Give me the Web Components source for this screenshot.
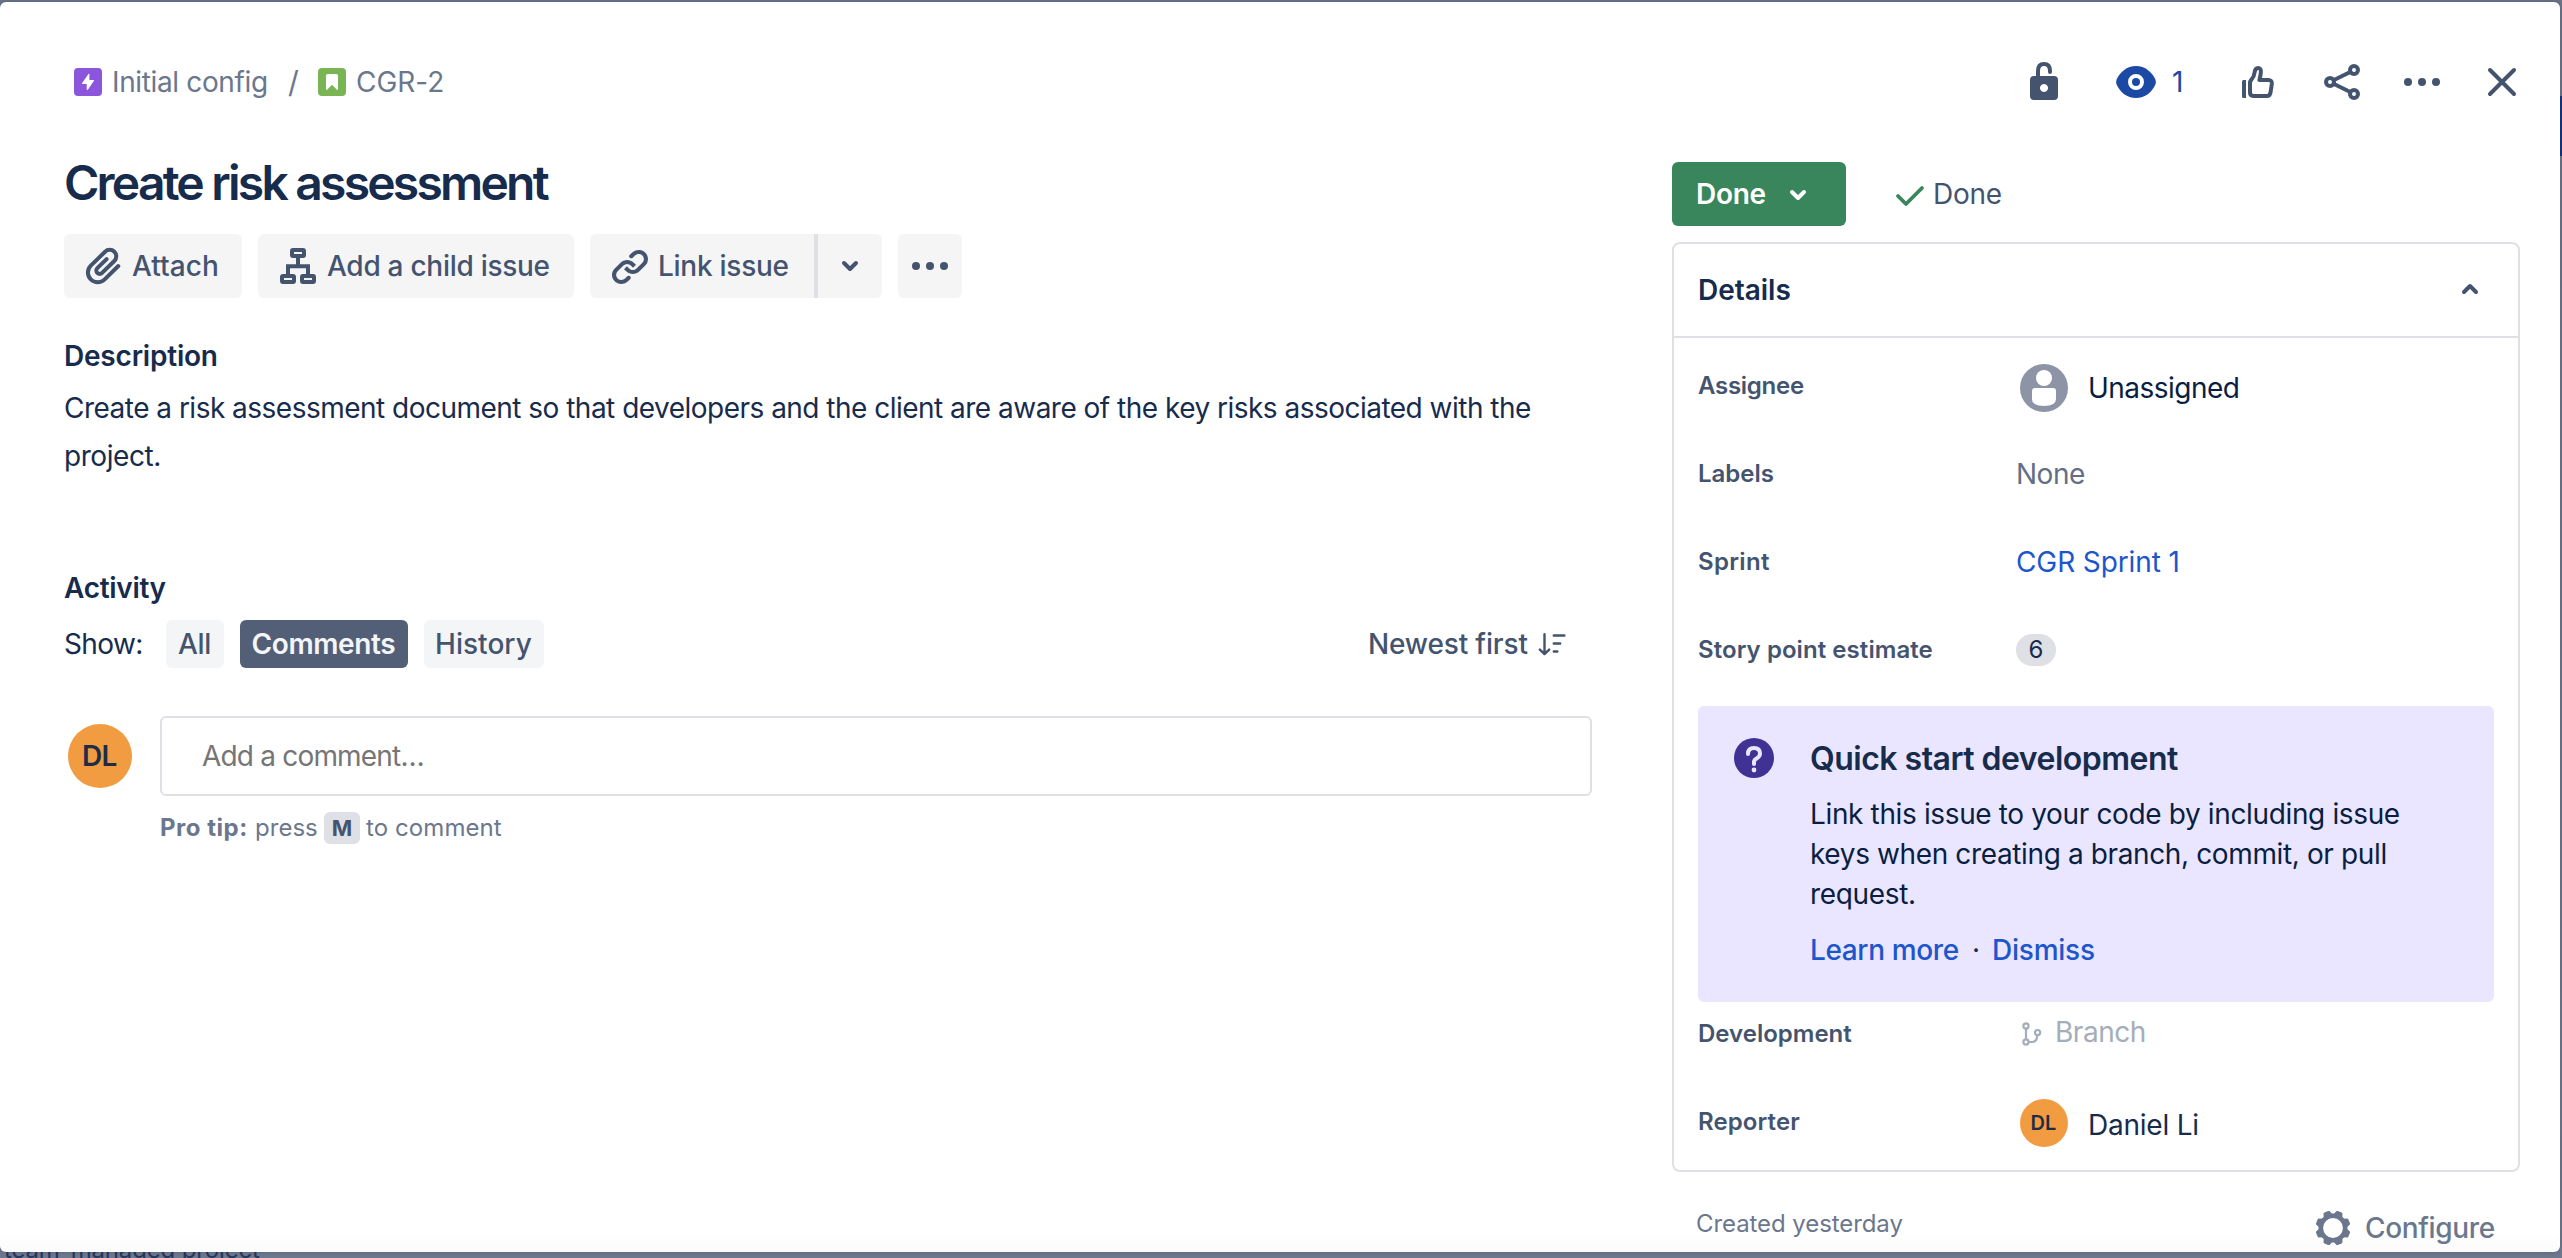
<!DOCTYPE html>
<html lang="en">
<head>
<meta charset="utf-8">
<title>Create risk assessment</title>
<style>
html,body{margin:0;height:100%;overflow:hidden}
body{background:#6c768b;font-family:Inter,"Liberation Sans",sans-serif}
</style>
</head>
<body>
<issue-dialog></issue-dialog>
<script>
const define = (name, html, setup) => {
  const tpl = document.createElement('template');
  tpl.innerHTML = html;
  customElements.define(name, class extends HTMLElement {
    connectedCallback() {
      if (this.shadowRoot) return;
      this.attachShadow({mode: 'open'}).append(tpl.content.cloneNode(true));
      if (setup) setup.call(this, this.shadowRoot);
    }
  });
};

/* One line of text, tracked so that it fills the width given in "w". */
define('ui-text', `<style>
:host{display:block;flex:none;white-space:nowrap;font-size:28px;line-height:40px}
</style><slot></slot>`, function () {
  const w = +this.getAttribute('w');
  if (!w) return;
  const range = document.createRange();
  range.selectNodeContents(this);
  const natural = range.getBoundingClientRect().width;
  this.style.letterSpacing = (w - 1.2 - natural) / this.textContent.length + 'px';
  this.style.width = w + 'px';
});

const S = (w, extra = '') => `fill="none" stroke="currentColor" stroke-width="${w}" stroke-linecap="round" stroke-linejoin="round" ${extra}`;
const ICONS = {
  epic: [28, 28, '<rect width="28" height="28" rx="4" fill="#8b55dc"/><path d="M14.6 5.8 L8 15.2 Q7.7 16 8.5 16 H12.7 V21.4 Q13.2 22.6 14 21.6 L20 12.8 Q20.4 12 19.5 12 H15.4 V6.3 Q15.2 5.3 14.6 5.8Z" fill="#fff"/>'],
  story: [28, 28, '<rect width="28" height="28" rx="4" fill="#79b554"/><path d="M8 7.6 Q8 6 9.6 6 H18.4 Q20 6 20 7.6 V21.4 Q19.6 22.4 18.7 21.6 L14 16.8 L9.3 21.6 Q8.4 22.4 8 21.4Z" fill="#fff"/>'],
  unlock: [28, 38, `<path d="M8 15 V9 Q8 2 14 2 T20 9 V10" ${S(4)}/><path fill-rule="evenodd" fill="currentColor" d="M4 14 H24 Q28 14 28 18 V34 Q28 38 24 38 H4 Q0 38 0 34 V18 Q0 14 4 14Z M14 22 a4 4 0 1 0 .01 0Z"/>`],
  watch: [40, 32, '<path fill="currentColor" d="M20 0 C29 0 36 6 39.4 13.6 Q40.4 16 39.4 18.4 C36 26 29 32 20 32 C11 32 4 26 .6 18.4 Q-.4 16 .6 13.6 C4 6 11 0 20 0Z"/><circle cx="20" cy="16" r="6" fill="currentColor" stroke="#fff" stroke-width="4"/>'],
  like: [32, 32, `<path d="M0 15.5 Q0 14 1.5 14 H4 V32 H1.5 Q0 32 0 30.5Z" fill="currentColor"/><path d="M8 17 Q8 15.2 9.4 13.6 Q12.2 10.6 12.6 6.4 Q13.1 2 16.1 2 Q19 2 18.9 5.6 Q18.8 8.6 17.4 14 H26.3 Q30.3 14 29.8 18 L28.5 26.7 Q27.9 30 25 30 H11.4 Q8 30 8 26.6Z" ${S(4)}/>`],
  share: [36, 36, `<g ${S(4)}><circle cx="6" cy="18" r="4"/><circle cx="30" cy="6" r="4"/><circle cx="30" cy="30" r="4"/><path d="M10 16 L26.3 8 M10 20 L26.3 28"/></g>`],
  more: [36, 36, '<g fill="currentColor"><circle cx="4" cy="18" r="4"/><circle cx="18" cy="18" r="4"/><circle cx="32" cy="18" r="4"/></g>'],
  close: [28, 28, `<path d="M2 2 L26 26 M26 2 L2 26" ${S(4)}/>`],
  attach: [48, 48, '<path transform="scale(2)" fill="currentColor" d="M11.643 17.965c-1.53 1.495-4.016 1.496-5.542.004a3.773 3.773 0 01.002-5.412l7.147-6.985a2.316 2.316 0 013.22.004 2.224 2.224 0 01-.004 3.185l-6.12 5.98c-.27.264-.716.264-.983.003a.671.671 0 01.003-.956l4.635-4.53a1 1 0 00-1.397-1.431l-4.635 4.53a2.671 2.671 0 00-.004 3.816c1.045 1.022 2.732 1.022 3.779-.001l6.12-5.98a4.222 4.222 0 00.004-6.047 4.316 4.316 0 00-6.016-.004l-7.147 6.984a5.773 5.773 0 00-.002 8.273c2.304 2.252 6.034 2.25 8.337-.003l6.817-6.66a1 1 0 00-1.398-1.431l-6.816 6.66z"/>'],
  child: [36, 36, `<g ${S(4)}><rect x="12" y="2" width="12" height="6" rx="1"/><rect x="2" y="28" width="12" height="6" rx="1"/><rect x="22" y="28" width="12" height="6" rx="1"/><path d="M18 9 V18 M8 27 V18.2 H28 V27" stroke-linejoin="miter" stroke-linecap="butt"/></g>`],
  link: [48, 48, '<g transform="scale(2)" fill="currentColor"><path d="M12.856 5.457l-.937.92a1.002 1.002 0 000 1.437 1.047 1.047 0 001.463 0l.984-.966c.967-.95 2.542-1.135 3.602-.288a2.54 2.54 0 01.203 3.81l-2.903 2.852a2.646 2.646 0 01-3.696 0l-1.11-1.09L9 13.57l1.108 1.089c1.822 1.788 4.802 1.788 6.622 0l2.905-2.852a4.558 4.558 0 00-.357-6.82c-1.893-1.517-4.695-1.226-6.422.47"/><path d="M11.144 19.543l.937-.92a1.002 1.002 0 000-1.437 1.047 1.047 0 00-1.462 0l-.985.966c-.967.95-2.542 1.135-3.602.288a2.54 2.54 0 01-.203-3.81l2.903-2.852a2.646 2.646 0 013.696 0l1.11 1.09L15 11.43l-1.108-1.089c-1.822-1.788-4.802-1.788-6.622 0l-2.905 2.852a4.558 4.558 0 00.357 6.82c1.893 1.517 4.695 1.226 6.422-.47"/></g>'],
  down: [16, 10, `<path d="M2 2 L8 8 L14 2" ${S(4)}/>`],
  up: [16, 10, `<path d="M2 8 L8 2 L14 8" ${S(4)}/>`],
  check: [28, 20, `<path d="M2 10 L10 18 L26 2" ${S(3.8)}/>`],
  sort: [28, 24, `<g ${S(2.4)}><path d="M6.5 2.2 V21 M1.8 17.6 L6.5 22 L11.2 17.6"/><path d="M15.8 3.5 H26.4 M15.8 11.5 H22.2 M15.8 19.5 H19.4"/></g>`],
  person: [48, 48, '<circle cx="24" cy="24" r="24" fill="#8c94a5"/><circle cx="24" cy="14" r="8" fill="#fff"/><path fill="#fff" d="M15 24 H33 Q36 24 36 27 V35 Q36 42 24 42 Q12 42 12 35 V27 Q12 24 15 24Z"/>'],
  help: [40, 40, '<circle cx="20" cy="20" r="20" fill="#403294"/><path d="M14 16 Q14 10 20 10 Q26 10 26 15.6 Q26 18.6 22.6 20.4 Q20 21.8 20 24 V26" fill="none" stroke="#eae6ff" stroke-width="4" stroke-linecap="round"/><circle cx="20" cy="32" r="2.4" fill="#eae6ff"/>'],
  branch: [20, 24, `<g ${S(2.2)}><circle cx="4" cy="4" r="2.6"/><circle cx="4" cy="20" r="2.6"/><circle cx="15.6" cy="10.6" r="2.6"/><path d="M4 6.6 V17.4 M6.6 20 H10.6 Q15 19.6 15.2 13.4"/></g>`],
  gear: [36, 36, `<circle cx="18" cy="18" r="12.2" fill="none" stroke="currentColor" stroke-width="4.6"/><g fill="currentColor">${[0,1,2,3,4,5,6,7].map(i => `<path transform="rotate(${22.5 + i * 45} 18 18)" d="M13 6 L14.6 1.4 Q15 .5 16 .5 H20 Q21 .5 21.4 1.4 L23 6Z"/>`).join('')}</g>`]
};
define('ui-icon', `<style>:host{display:block;flex:none;line-height:0}svg{display:block;overflow:visible}</style><div></div>`, function (root) {
  const [w, h, body] = ICONS[this.getAttribute('name')];
  root.querySelector('div').innerHTML = `<svg width="${w}" height="${h}" viewBox="0 0 ${w} ${h}">${body}</svg>`;
});

define('ui-button', `<style>
:host{display:flex;flex:none;align-items:center;box-sizing:border-box;height:64px;border-radius:6px;background:#f5f5f6;color:#44546f;font-weight:550}
</style><slot></slot>`);

define('ui-pill', `<style>
:host{display:flex;flex:none;align-items:center;justify-content:center;height:48px;border-radius:6px;background:#f4f5f7;color:#44546f;font-weight:550}
:host([selected]){background:#535f77;color:#f4f5f7}
</style><slot></slot>`);

define('ui-avatar', `<style>
:host{display:flex;flex:none;align-items:center;justify-content:center;border-radius:50%;background:#f29c42;color:#1f2c48;font-weight:600;width:64px;height:64px}
:host([small]){width:48px;height:48px}
</style><slot></slot>`);

define('detail-row', `<style>
:host{display:flex;align-items:center;height:88px;padding-left:24px;color:#44546f}
ui-text{font-size:24px;font-weight:600;line-height:32px}
.l{width:318px;flex:none}
.v{display:flex;align-items:center;color:#172b4d}
</style><div class="l"><ui-text></ui-text></div><div class="v"><slot></slot></div>`, function (root) {
  const t = document.createElement('ui-text');
  t.setAttribute('w', this.getAttribute('w'));
  t.textContent = this.getAttribute('label');
  root.querySelector('ui-text').replaceWith(t);
});

define('issue-header', `<style>
:host{display:flex;align-items:center;height:160px;padding:0 44px 0 74px;color:#44546f}
.crumbs{display:flex;align-items:center;color:#6b778c;flex:1}
.watch{display:flex;align-items:center;color:#1c49a3;margin:0 57px 0 58px}
</style>
<div class="crumbs">
<ui-icon name="epic"></ui-icon><ui-text w="157" style="margin-left:10px">Initial config</ui-text>
<ui-text style="margin-left:19px;width:30px;font-size:30px">/</ui-text>
<ui-icon name="story"></ui-icon><ui-text w="89.5" style="margin-left:10px">CGR-2</ui-text></div>
<ui-icon name="unlock" style="margin-bottom:2px"></ui-icon>
<div class="watch"><ui-icon name="watch"></ui-icon><ui-text style="margin-left:16px;width:13px">1</ui-text></div>
<ui-icon name="like"></ui-icon>
<ui-icon name="share" style="margin-left:50px"></ui-icon>
<ui-icon name="more" style="margin-left:44px"></ui-icon>
<ui-icon name="close" style="margin-left:48px"></ui-icon>`);

define('issue-main', `<style>
:host{display:flex;flex-direction:column;width:1528px;flex:none;color:#172b4d}
.row{display:flex;align-items:center}
.title{font-size:48px;line-height:42px;font-weight:600}
.actions{margin-top:30px;height:64px}
.h{font-weight:600}
.body ui-text{line-height:48px}
.show{margin-top:12px;height:48px}
.sort{margin-left:auto;color:#44546f;font-weight:550;padding-right:26px}
.comment{margin-top:48px;padding-left:4px;height:80px}
.box{display:flex;align-items:center;box-sizing:border-box;width:1432px;height:80px;margin-left:28px;border:2px solid #dfe0e6;border-radius:6px;padding-left:40px;color:#757575}
.tip{margin:16px 0 0 96px;height:32px;color:#6b778c}
.tip ui-text{font-size:24px;line-height:32px}
.key{display:flex;align-items:center;justify-content:center;width:36px;height:32px;border-radius:6px;background:#dfe0e5;color:#44546f}
.key ui-text{font-size:22px;font-weight:700}
</style>
<ui-text class="title" w="484">Create risk assessment</ui-text>
<div class="row actions">
<ui-button style="width:178px;padding-left:16px"><ui-icon name="attach"></ui-icon><ui-text w="88" style="margin-left:4px">Attach</ui-text></ui-button>
<ui-button style="width:316px;padding-left:22px;margin-left:16px"><ui-icon name="child"></ui-icon><ui-text w="224" style="margin-left:11px">Add a child issue</ui-text></ui-button>
<ui-button style="width:224px;padding-left:16px;margin-left:16px;border-radius:6px 0 0 6px"><ui-icon name="link"></ui-icon><ui-text w="132" style="margin-left:4px">Link issue</ui-text></ui-button>
<ui-button style="width:68px;border-left:4px solid #dfe0e6;padding-left:24px;border-radius:0 6px 6px 0"><ui-icon name="down"></ui-icon></ui-button>
<ui-button style="width:64px;padding-left:14px;margin-left:16px"><ui-icon name="more"></ui-icon></ui-button>
</div>
<ui-text class="h" w="155" style="margin-top:38px">Description</ui-text>
<div class="body" style="margin-top:8px"><ui-text w="1468">Create a risk assessment document so that developers and the client are aware of the key risks associated with the</ui-text><ui-text w="98">project.</ui-text></div>
<ui-text class="h" w="103" style="margin-top:88px">Activity</ui-text>
<div class="row show"><ui-text w="80">Show:</ui-text>
<ui-pill style="width:58px;margin-left:22px"><ui-text w="34">All</ui-text></ui-pill>
<ui-pill selected style="width:168px;margin-left:16px"><ui-text w="145" style="font-weight:600">Comments</ui-text></ui-pill>
<ui-pill style="width:120px;margin-left:16px"><ui-text w="98">History</ui-text></ui-pill>
<div class="row sort"><ui-text w="161">Newest first</ui-text><ui-icon name="sort" style="margin-left:9px"></ui-icon></div></div>
<div class="row comment"><ui-avatar><ui-text w="36">DL</ui-text></ui-avatar><div class="box"><ui-text w="223">Add a comment…</ui-text></div></div>
<div class="row tip"><ui-text w="89" style="font-weight:700">Pro tip:</ui-text><ui-text w="64" style="margin-left:6px">press</ui-text><div class="key" style="margin-left:5px"><ui-text>M</ui-text></div><ui-text w="137" style="margin-left:6px">to comment</ui-text></div>`);

define('quick-start', `<style>
:host{display:flex;box-sizing:border-box;width:796px;height:296px;margin-left:24px;padding:32px 0 0 36px;border-radius:6px;background:#eae6ff;color:#091e42}
.c{margin-left:36px}
.h{font-size:32px;font-weight:600;line-height:40px;color:#172b4d;margin:1px 0 15px}
.links{display:flex;margin-top:16px;font-weight:550;color:#1c55cc}
</style><ui-icon name="help"></ui-icon><div class="c">
<ui-text class="h" w="369">Quick start development</ui-text>
<ui-text w="591">Link this issue to your code by including issue</ui-text>
<ui-text w="578">keys when creating a branch, commit, or pull</ui-text>
<ui-text w="107">request.</ui-text>
<div class="links"><ui-text w="150">Learn more</ui-text><ui-text style="width:32px;text-align:center;font-weight:400;color:#172b4d">·</ui-text><ui-text w="104">Dismiss</ui-text></div></div>`);

define('issue-side', `<style>
:host{display:flex;flex-direction:column;width:848px;flex:none;margin-left:80px;color:#091e42}
.row{display:flex;align-items:center}
.panel{box-sizing:border-box;height:930px;margin-top:16px;border:2px solid #dfe0e6;border-radius:8px}
.head{box-sizing:border-box;height:94px;border-bottom:2px solid #dfe0e6;padding:0 40px 0 24px;justify-content:space-between;color:#172b4d}
.foot{height:72px;margin-top:8px;color:#6b778c;padding:0 24px;justify-content:space-between}
.badge{display:flex;align-items:center;justify-content:center;width:40px;height:32px;border-radius:16px;background:#dfe0e5}
</style>
<div class="row" style="height:64px">
<ui-button style="width:174px;padding-left:24px;background:#39855c;color:#fff;font-weight:600"><ui-text w="71">Done</ui-text><ui-icon name="down" style="margin:2px 0 0 23px"></ui-icon></ui-button>
<ui-icon name="check" style="margin:4px 0 0 50px;color:#39855c"></ui-icon><ui-text w="70" style="margin-left:9px;color:#44546f">Done</ui-text></div>
<div class="panel">
<div class="row head"><ui-text w="94" style="font-weight:600">Details</ui-text><ui-icon name="up" style="color:#44546f;margin-bottom:2px"></ui-icon></div>
<detail-row label="Assignee" w="107" style="margin-top:4px"><ui-icon name="person" style="margin:4px 0 0 4px"></ui-icon><ui-text w="152.5" style="margin:4px 0 0 20px;color:#091e42">Unassigned</ui-text></detail-row>
<detail-row label="Labels" w="77"><ui-text w="70" style="color:#626f86">None</ui-text></detail-row>
<detail-row label="Sprint" w="73"><ui-text w="165" style="color:#1c55cc">CGR Sprint 1</ui-text></detail-row>
<detail-row label="Story point estimate" w="236"><div class="badge"><ui-text style="font-size:24px;line-height:32px">6</ui-text></div></detail-row>
<quick-start style="margin-top:12px"></quick-start>
<detail-row label="Development" w="155" style="height:63px"><ui-icon name="branch" style="margin-left:6px;color:#a5adba"></ui-icon><ui-text w="92" style="margin:-3px 0 0 13px;color:#a5adba">Branch</ui-text></detail-row>
<detail-row label="Reporter" w="103" style="margin-top:13px"><ui-avatar small style="margin:1px 0 0 4px"><ui-text w="27" style="font-size:20px">DL</ui-text></ui-avatar><ui-text w="112" style="margin:5px 0 0 20px">Daniel Li</ui-text></detail-row>
</div>
<div class="row foot"><ui-text w="208" style="font-size:24px;margin-top:16px">Created yesterday</ui-text><div class="row" style="margin-top:24px"><ui-icon name="gear"></ui-icon><ui-text w="131" style="margin-left:14px;font-weight:550">Configure</ui-text></div></div>`);

define('issue-dialog', `<style>
:host{display:flex;flex-direction:column;width:2562px;height:1258px;overflow:hidden;box-sizing:border-box;padding-top:2px;background:linear-gradient(#6b758a,#6e788d)}
.modal{position:relative;width:2560px;height:1250px;flex:none;border-radius:6px;background:linear-gradient(#fff 1225px,#fbfbfb);box-shadow:0 0 4px #091e4240}
.cols{display:flex;padding-left:64px}
.below{height:6px;overflow:hidden;padding-left:4px;display:flex;align-items:flex-end;color:#26365c}
.below ui-text{font-size:24px;line-height:30px;margin-bottom:-7px}
.edge{position:absolute;left:2560px;top:94px;width:2px;height:60px;background:#15307b}
</style><div class="modal"><issue-header></issue-header><div class="cols"><issue-main></issue-main><issue-side></issue-side></div><div class="edge"></div></div>
<div class="below"><ui-text w="257">team-managed project</ui-text></div>`);
</script>
</body>
</html>
